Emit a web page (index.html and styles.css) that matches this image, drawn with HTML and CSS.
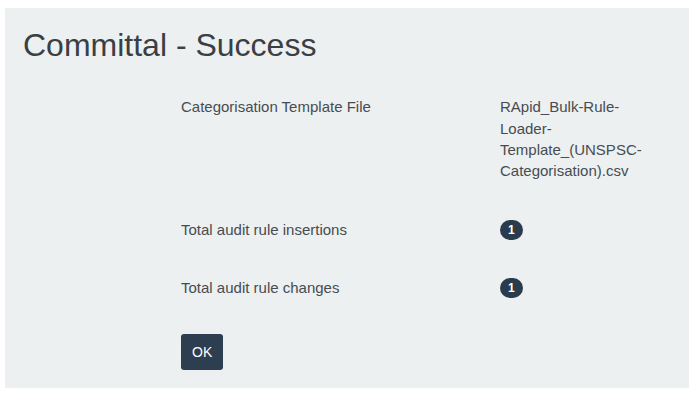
FILE: index.html
```html
<!DOCTYPE html>
<html lang="en">
<head>
<meta charset="utf-8">
<title>Committal - Success</title>
<link rel="stylesheet" href="styles.css">
</head>
<body>
<div class="page">
  <section class="panel">
    <h1 class="title">Committal - Success</h1>
    <div class="summary">
      <div class="label">Categorisation Template File</div>
      <div class="value">RApid_Bulk-Rule-Loader-Template_(UNSPSC-Categorisation).csv</div>
      <div class="label">Total audit rule insertions</div>
      <div class="value"><span class="badge">1</span></div>
      <div class="label">Total audit rule changes</div>
      <div class="value"><span class="badge">1</span></div>
    </div>
    <div class="actions">
      <button class="btn" type="button">OK</button>
    </div>
  </section>
</div>
</body>
</html>
```

FILE: styles.css
```css
html, body {
  margin: 0;
  padding: 0;
  background: #ffffff;
}

body {
  font-family: "Liberation Sans", Arial, sans-serif;
  font-size: 15px;
  line-height: 1.42857;
  color: #474c51;
}

.page {
  padding: 8px 6px 0 5px;
}

.panel {
  background: #ecf0f1;
  height: 380px;
  box-sizing: border-box;
  padding: 20px 18px;
}

.title {
  margin: 0;
  font-size: 32px;
  font-weight: 400;
  line-height: 1.1;
  color: #3a3f44;
}

.summary {
  margin: 33px 0 0 158px;
  display: grid;
  grid-template-columns: 319px 160px;
  row-gap: 37px;
  align-items: start;
}

.badge {
  display: inline-block;
  vertical-align: middle;
  font-size: 12px;
  font-weight: 700;
  line-height: 1;
  color: #ffffff;
  background: #2a3b4d;
  padding: 4px 8px 4px 8px;
  border-radius: 10px;
  margin-top: -2px;
}

.actions {
  margin: 35px 0 0 158px;
}

.btn {
  font-family: "Liberation Sans", Arial, sans-serif;
  font-size: 14px;
  line-height: 20px;
  color: #ffffff;
  background: #2c3e50;
  border: 0;
  border-radius: 3px;
  padding: 8px 11px;
  cursor: pointer;
}
```
